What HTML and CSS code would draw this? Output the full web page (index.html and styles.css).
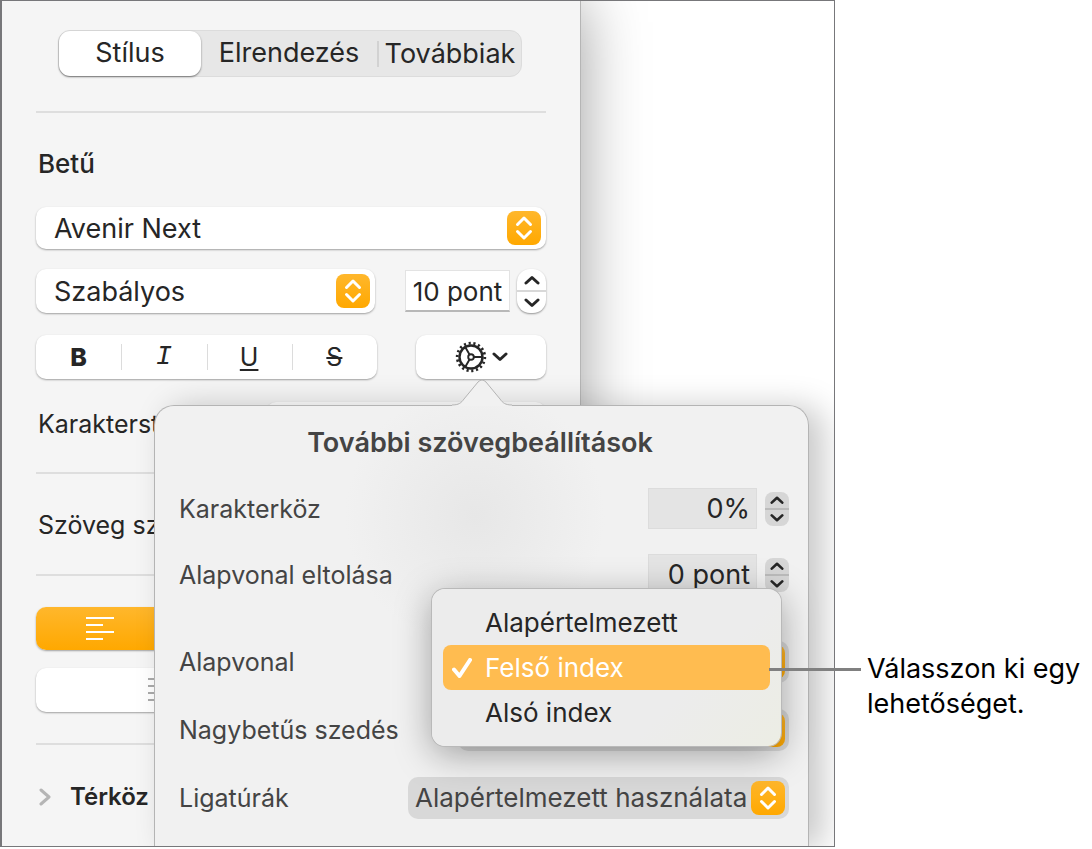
FILE: index.html
```html
<!DOCTYPE html>
<html lang="hu">
<head>
    <meta charset="UTF-8">
    <meta name="viewport" content="width=device-width, initial-scale=1.0">
    <title>További szövegbeállítások</title>
    <link rel="stylesheet" href="styles.css">
</head>
<body>
    <svg class="sprite" aria-hidden="true">
        <symbol id="updown" viewBox="0 0 34 34">
            <path d="M10.500 13.500L17 7L23.500 13.500M10.500 20.500L17 27L23.500 20.500"/>
        </symbol>
        <symbol id="up" viewBox="0 0 16 10"><path d="M2 8L8 2.500L14 8"/></symbol>
        <symbol id="down" viewBox="0 0 16 10"><path d="M2 2L8 7.500L14 2"/></symbol>
    </svg>

    <figure class="figure">
        <div class="shot">
            <aside class="sidebar">
                <div class="tabs">
                    <button class="tab active">Stílus</button>
                    <button class="tab">Elrendezés</button>
                    <button class="tab last">Továbbiak</button>
                </div>
                <hr class="first">

                <h2>Betű</h2>
                <div class="popup font">
                    <select aria-label="Betűtípus"><option>Avenir Next</option></select>
                    <svg class="badge"><use href="#updown"/></svg>
                </div>
                <div class="row style-row">
                    <div class="popup">
                        <select aria-label="Betűstílus"><option>Szabályos</option></select>
                        <svg class="badge"><use href="#updown"/></svg>
                    </div>
                    <input class="size" type="text" value="10 pont" aria-label="Betűméret">
                    <div class="stepper">
                        <button aria-label="Növelés"><svg><use href="#up"/></svg></button>
                        <button aria-label="Csökkentés"><svg><use href="#down"/></svg></button>
                    </div>
                </div>
                <div class="row format-row">
                    <div class="buttons">
                        <button class="bold">B</button>
                        <button class="italic">I</button>
                        <button class="underline">U</button>
                        <button class="strike">S</button>
                    </div>
                    <button class="gear" aria-label="További beállítások">
                        <svg class="cog" viewBox="0 0 32 32">
                            <circle cx="16" cy="16" r="11.500" stroke-width="2.400"/>
                            <circle cx="16" cy="16" r="13.800" stroke-width="2.800" pathLength="36" stroke-dasharray="0.900 1.100"/>
                            <circle cx="16" cy="16" r="2.800" stroke-width="1.900"/>
                            <path stroke-width="1.900" d="M19 16H27M14.500 13.400L10.500 6.500M14.500 18.600L10.500 25.500"/>
                        </svg>
                        <svg class="arrow"><use href="#down"/></svg>
                    </button>
                </div>
                <div class="row char-row">
                    <label for="charstyle">Karakterstílus</label>
                    <div class="popup">
                        <select id="charstyle"><option>Nincs</option></select>
                        <svg class="badge"><use href="#updown"/></svg>
                    </div>
                </div>
                <hr class="char-line">
                <p class="color">Szöveg színe</p>
                <hr class="color-line">

                <div class="buttons align">
                    <button class="on" aria-label="Balra">
                        <svg viewBox="0 0 28 26"><path d="M0 2H28M0 9H17M0 16H28M0 23H17"/></svg>
                    </button>
                    <button aria-label="Középre"></button>
                    <button aria-label="Jobbra"></button>
                    <button aria-label="Sorkizárt"></button>
                </div>
                <div class="buttons indent">
                    <button aria-label="Behúzás csökkentése">
                        <svg viewBox="0 0 32 26"><path d="M0 2H32M0 9H32M0 16H32M0 23H32"/></svg>
                    </button>
                    <button aria-label="Behúzás növelése"></button>
                </div>
                <hr class="indent-line">
                <button class="spacing">
                    <svg viewBox="0 0 12 20"><path d="M2 3L10 10L2 17"/></svg>
                    Térköz
                </button>
            </aside>

            <section class="popover">
                <svg class="tip" viewBox="0 0 60 27">
                    <path class="fill" d="M0 26C7 26 9 24 12 20L26 3Q30 -1 34 3L48 20C51 24 53 26 60 26V27H0Z"/>
                    <path class="edge" d="M0 26C7 26 9 24 12 20L26 3Q30 -1 34 3L48 20C51 24 53 26 60 26"/>
                </svg>
                <h1>További szövegbeállítások</h1>
                <div class="row option number">
                    <label for="tracking">Karakterköz</label>
                    <input id="tracking" type="text" value="0%">
                    <div class="stepper small">
                        <button aria-label="Növelés"><svg><use href="#up"/></svg></button>
                        <button aria-label="Csökkentés"><svg><use href="#down"/></svg></button>
                    </div>
                </div>
                <div class="row option number">
                    <label for="shift">Alapvonal eltolása</label>
                    <input id="shift" type="text" value="0 pont">
                    <div class="stepper small">
                        <button aria-label="Növelés"><svg><use href="#up"/></svg></button>
                        <button aria-label="Csökkentés"><svg><use href="#down"/></svg></button>
                    </div>
                </div>
                <div class="row option baseline">
                    <label for="baseline">Alapvonal</label>
                    <div class="popup grey">
                        <select id="baseline"><option>Felső index</option></select>
                        <svg class="badge"><use href="#updown"/></svg>
                    </div>
                </div>
                <div class="row option">
                    <label for="caps">Nagybetűs szedés</label>
                    <div class="popup grey">
                        <select id="caps"><option>Nincs</option></select>
                        <svg class="badge"><use href="#updown"/></svg>
                    </div>
                </div>
                <div class="row option">
                    <label for="ligatures">Ligatúrák</label>
                    <div class="popup grey wide">
                        <select id="ligatures"><option>Alapértelmezett használata</option></select>
                        <svg class="badge"><use href="#updown"/></svg>
                    </div>
                </div>

                <div class="menu">
                    <button>Alapértelmezett</button>
                    <button class="selected">
                        <svg viewBox="0 0 20 20"><path d="M2 11.500L7.500 18L18 2"/></svg>
                        Felső index
                    </button>
                    <button>Alsó index</button>
                </div>
            </section>
        </div>
        <figcaption>Válasszon ki egy lehetőséget.</figcaption>
    </figure>
</body>
</html>
```
FILE: styles.css
```css
* {
    box-sizing: border-box;
}
body {
    margin: 0;
    background: #fff;
    color: #262626;
    font-family: Inter, "Liberation Sans", sans-serif;
    font-size: 25px;
    line-height: 30px;
}
button, input, select {
    margin: 0;
    padding: 0;
    border: none;
    background: none;
    color: inherit;
    font: inherit;
}
h1, h2, p, hr {
    margin: 0;
    font-size: 25px;
}
svg {
    fill: none;
    stroke: currentColor;
    stroke-linecap: round;
    stroke-linejoin: round;
}
.sprite {
    display: none;
}
.row {
    display: flex;
    align-items: center;
}

/* frame and caption */
.figure {
    display: flex;
    margin: 0;
}
.shot {
    position: relative;
    flex: 1;
    overflow: hidden;
    border: 1px solid #77777a;
    border-left-width: 2px;
}
figcaption {
    position: relative;
    width: 257px;
    padding: 651px 0 0 32px;
    color: #000;
    font-size: 27px;
    line-height: 35px;
}
figcaption::before {
    content: "";
    position: absolute;
    top: 668px;
    left: -66px;
    width: 92px;
    height: 3px;
    background: #808080;
}

/* sidebar */
.sidebar {
    width: 578px;
    padding: 29px 34px 34px;
    background: #f5f5f5;
    box-shadow: 0 0 0 1px #b5b5b5, 0 0 60px rgba(0, 0, 0, 0.4);
}
hr {
    height: 2px;
    border: none;
    background: #dedede;
}
.tabs {
    display: flex;
    height: 47px;
    margin: 0 24px 0 22px;
    border: 1px solid #dcdcdc;
    border-radius: 12px;
    background: #e7e7e7;
    font-size: 27px;
}
.tab {
    flex: 1;
    padding-bottom: 2px;
    border-radius: 11px;
    white-space: nowrap;
}
.tab.active {
    flex: none;
    width: 142px;
    background: #fff;
    box-shadow: 0 1px 2px rgba(0, 0, 0, 0.5);
}
.tab.last {
    flex: none;
    width: 144px;
    height: 26px;
    align-self: center;
    border-left: 2px solid #d2d2d2;
    border-radius: 0;
    line-height: 26px;
}
.first {
    margin-top: 34px;
}
h2 {
    margin-top: 36px;
    font-size: 26px;
    font-weight: 500;
}
h2, .char-row label, .color {
    padding-left: 2px;
}

/* pop-up buttons */
.popup {
    position: relative;
    height: 44px;
    font-size: 27px;
}
.popup select {
    display: block;
    width: 100%;
    height: 100%;
    padding: 2px 0 0 18px;
    appearance: none;
    border-radius: 10px;
    background: #fff;
    box-shadow: 0 1px 2px rgba(0, 0, 0, 0.35);
}
.badge {
    position: absolute;
    top: 5px;
    right: 5px;
    width: 34px;
    height: 34px;
    border-radius: 8px;
    background: linear-gradient(#ffb72c, #ffa800);
    color: #fff;
    stroke-width: 3px;
    pointer-events: none;
}
.font {
    height: 42px;
    margin-top: 28px;
}
.font .badge {
    top: 4px;
}
.style-row {
    margin-top: 20px;
}
.style-row .popup {
    width: 339px;
}
.size {
    width: 105px;
    height: 42px;
    margin: 0 7px 0 auto;
    padding-top: 2px;
    border: 1px solid #e3e3e3;
    border-bottom: 2px solid #b8b8b8;
    background: #fff;
    font-size: 26px;
    text-align: center;
}
.stepper {
    display: flex;
    flex-direction: column;
    width: 29px;
    height: 44px;
    border-radius: 13px;
    background: #fff;
    box-shadow: 0 1px 2px rgba(0, 0, 0, 0.4);
}
.stepper button {
    display: flex;
    flex: 1;
    align-items: center;
    justify-content: center;
}
.stepper button + button {
    border-top: 2px solid #d8d8d8;
}
.stepper svg, .arrow {
    width: 16px;
    height: 10px;
    stroke-width: 3px;
}

/* text format buttons */
.format-row {
    justify-content: space-between;
    margin-top: 22px;
}
.buttons {
    display: flex;
    height: 44px;
    border-radius: 10px;
    background: #fff;
    box-shadow: 0 1px 2px rgba(0, 0, 0, 0.35);
}
.buttons button {
    position: relative;
    flex: 1;
}
.buttons button + button::before {
    content: "";
    position: absolute;
    top: 9px;
    bottom: 9px;
    left: 0;
    width: 1px;
    background: #dcdcdc;
}
.format-row .buttons {
    width: 341px;
}
.bold {
    font-weight: 800;
}
.italic {
    font-family: "Liberation Mono", monospace;
    font-size: 27px;
    font-style: italic;
}
.underline {
    text-decoration: underline 2px;
    text-underline-offset: 3px;
}
.strike {
    text-decoration: line-through 2px;
}
.gear {
    display: flex;
    align-items: center;
    justify-content: center;
    gap: 5px;
    width: 130px;
    height: 44px;
    border-radius: 10px;
    background: #fff;
    box-shadow: 0 1px 2px rgba(0, 0, 0, 0.35);
}
.cog {
    width: 32px;
    height: 32px;
    stroke-linecap: butt;
}
.char-row {
    justify-content: space-between;
    margin-top: 23px;
}
.char-row .popup {
    width: 280px;
}
.char-line {
    margin-top: 26px;
}
.color {
    margin-top: 36px;
}
.color-line {
    margin-top: 34px;
}
.align {
    height: 43px;
    margin-top: 31px;
}
.buttons .on {
    border-radius: 10px 0 0 10px;
    background: linear-gradient(#ffb72c, #ffa800);
    color: #fff;
}
.align svg, .indent svg {
    display: block;
    width: 28px;
    height: 26px;
    margin: auto;
    stroke-linecap: butt;
    stroke-width: 2px;
}
.indent {
    margin-top: 18px;
    color: #aaa;
}
.indent svg {
    width: 32px;
}
.indent-line {
    margin-top: 31px;
}
.spacing {
    display: flex;
    align-items: center;
    gap: 19px;
    margin-top: 37px;
    font-size: 24px;
    font-weight: 600;
}
.spacing svg {
    width: 12px;
    height: 20px;
    margin-left: 3px;
    color: #b5b5b5;
    stroke-width: 3px;
}

/* text options popover */
.popover {
    position: absolute;
    top: 404px;
    bottom: 0;
    left: 152px;
    width: 655px;
    padding: 21px 19px 0 24px;
    border: 1px solid #b4b4b4;
    border-bottom: none;
    border-radius: 20px 20px 0 0;
    background: radial-gradient(circle at 320px 110px, #e7e7e7, #f1f1f1 130px);
    box-shadow: 14px 2px 32px rgba(0, 0, 0, 0.22);
    color: #444;
}
.tip {
    position: absolute;
    top: -27px;
    left: 297px;
    width: 60px;
    height: 27px;
}
.tip .fill {
    fill: #f1f1f1;
    stroke: none;
}
.tip .edge {
    stroke: #b4b4b4;
}
h1 {
    margin: 0 8px 29px 0;
    font-size: 27px;
    font-weight: 600;
    line-height: 32px;
    text-align: center;
}
.option {
    height: 42px;
    margin-bottom: 26px;
}
.number {
    height: 41px;
    margin-bottom: 25px;
}
.option label {
    margin-right: auto;
}
.option input {
    width: 109px;
    height: 41px;
    margin-right: 8px;
    padding-right: 6px;
    border: 1px solid #dcdcdc;
    background: #e4e4e4;
    color: #262626;
    font-size: 27px;
    text-align: right;
}
.small {
    width: 24px;
    height: 34px;
    border-radius: 8px;
    background: #d6d6d6;
    box-shadow: none;
    color: #262626;
}
.stepper.small svg {
    width: 14px;
}
.stepper.small button + button {
    border-color: #bbb;
}
.popup.grey {
    width: 331px;
    height: 42px;
    font-size: 26px;
}
.popup.wide {
    width: 381px;
}
.grey select {
    padding: 0 0 0 7px;
    background: #d8d8d8;
    box-shadow: none;
}
.grey .badge {
    top: 4px;
    right: 4px;
}
.baseline {
    margin-top: 46px;
}
.menu {
    position: absolute;
    top: 183px;
    left: 277px;
    width: 349px;
    padding: 11px;
    border-radius: 13px;
    background: linear-gradient(135deg, #ececec 70%, #ecede4);
    box-shadow: 0 0 0 1px #b9b9b9, 0 8px 36px rgba(0, 0, 0, 0.35);
    color: #262626;
    font-size: 26px;
}
.menu button {
    display: flex;
    align-items: center;
    width: 100%;
    height: 45px;
    padding-left: 42px;
    border-radius: 8px;
}
.menu .selected {
    gap: 13px;
    padding-left: 9px;
    background: #ffbc50;
    color: #fff;
}
.menu svg {
    width: 20px;
    height: 20px;
    stroke-width: 4px;
}
```
